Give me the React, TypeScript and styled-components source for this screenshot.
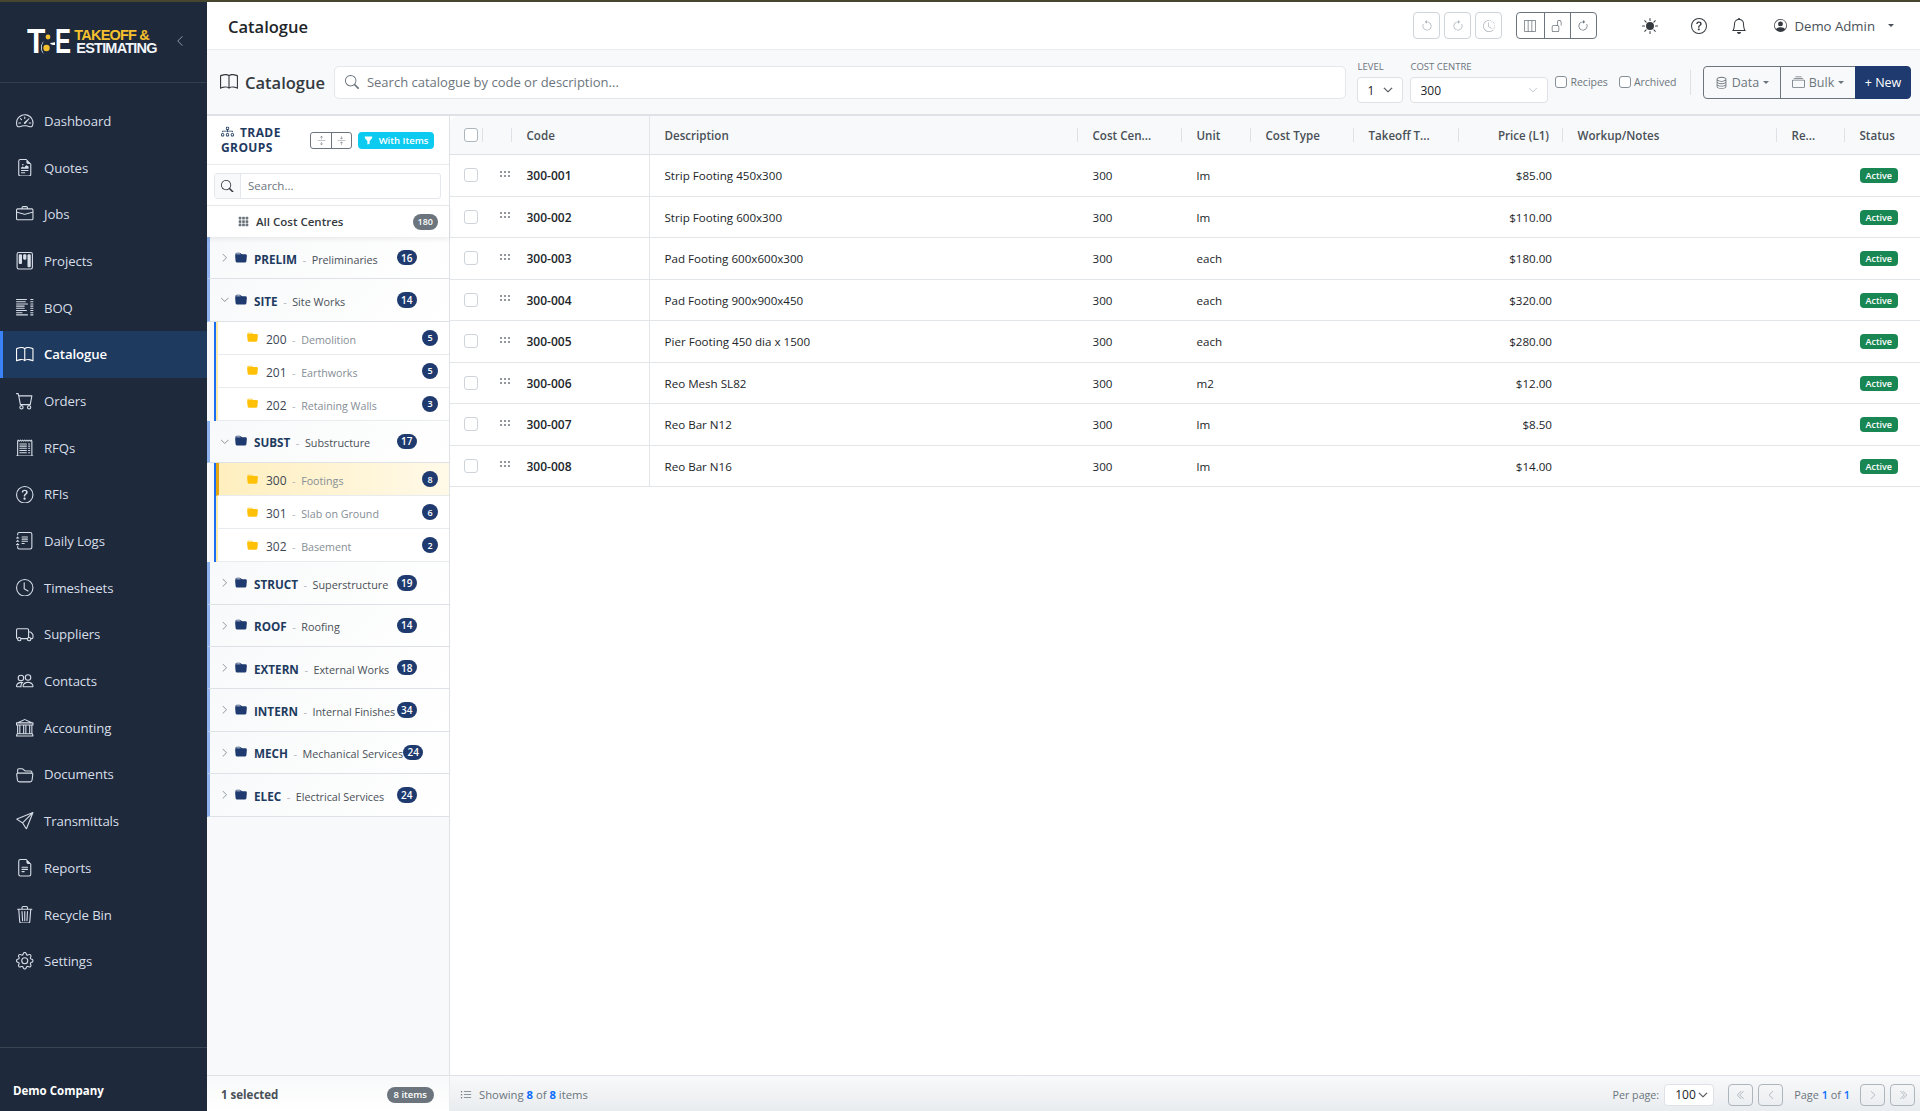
import React from "react";
import styled, { createGlobalStyle } from "styled-components";
import {
  BsArrowClockwise,
  BsArrowCounterclockwise,
  BsArrowsCollapse,
  BsArrowsExpand,
  BsBank,
  BsBell,
  BsBook,
  BsBriefcase,
  BsCart,
  BsChevronDoubleLeft,
  BsChevronDoubleRight,
  BsChevronDown,
  BsChevronLeft,
  BsChevronRight,
  BsClock,
  BsClockHistory,
  BsCollection,
  BsDatabase,
  BsDiagram3,
  BsFileEarmarkRichtext,
  BsFileEarmarkText,
  BsFolder2Open,
  BsFolderFill,
  BsFunnelFill,
  BsGear,
  BsGrid3X3GapFill,
  BsJournalText,
  BsKanban,
  BsLayoutThreeColumns,
  BsListColumns,
  BsListUl,
  BsPeople,
  BsPersonCircle,
  BsQuestionCircle,
  BsReceiptCutoff,
  BsSearch,
  BsSend,
  BsSpeedometer2,
  BsSunFill,
  BsTrash3,
  BsTruck,
  BsUnlock,
} from "react-icons/bs";

const FONT = `"Open Sans", "Noto Sans", "Liberation Sans", sans-serif`;
const NAVY = "#1e3a6e";

const GlobalStyle = createGlobalStyle`
  html, body, #root {
    margin: 0;
    height: 100%;
  }
  body {
    font-family: ${FONT};
    font-stretch: 88%;
    background: #fff;
    overflow: hidden;
  }
  * {
    box-sizing: border-box;
  }
`;

const Page = styled.div`
  height: 1111px;
  display: flex;
  flex-direction: column;
`;

const TopStrip = styled.div`
  height: 2px;
  background: #47472f;
  flex-shrink: 0;
`;

const Shell = styled.div`
  flex: 1;
  display: flex;
  min-height: 0;
`;

/* sidebar */
const Sidebar = styled.aside`
  width: 207px;
  flex-shrink: 0;
  background: #1e293b;
  display: flex;
  flex-direction: column;
`;

const LogoBar = styled.div`
  height: 81px;
  padding: 27px 21px 0 27px;
  display: flex;
  align-items: flex-start;
  justify-content: space-between;
  border-bottom: 1px solid rgba(255, 255, 255, 0.1);
`;

const Logo = styled.div`
  display: flex;
  align-items: center;
  height: 26px;
  font-family: "Liberation Sans", sans-serif;
  font-stretch: normal;
`;

const LogoLetter = styled.span<{ $squeeze: number }>`
  display: inline-block;
  color: #fff;
  font-size: 30px;
  font-weight: 700;
  line-height: 26px;
  transform: scale(${(p) => p.$squeeze}, 1.15);
  transform-origin: left center;
`;

const LogoT = styled(LogoLetter)`
  margin-right: -4px;
`;

const LogoE = styled(LogoLetter)`
  margin-right: -1px;
`;

const LogoSwirl = styled.svg`
  width: 14px;
  height: 26px;
  flex-shrink: 0;
`;

const LogoWords = styled.div`
  display: flex;
  flex-direction: column;
  font-size: 14.5px;
  font-weight: 700;
  line-height: 13px;
  letter-spacing: -0.8px;
`;

const LogoTop = styled.span`
  color: #f5c02e;
`;

const LogoBottom = styled.span`
  color: #f1f5f9;
  margin-left: 2px;
`;

const CollapseBtn = styled.span`
  color: #8d97a8;
  font-size: 12px;
  margin-top: 6px;
  display: flex;
`;

const Nav = styled.nav`
  padding-top: 14.5px;
  flex: 1;
`;

const NavItem = styled.div<{ $active?: boolean }>`
  height: 46.7px;
  display: flex;
  align-items: center;
  gap: 10.5px;
  padding-left: ${(p) => (p.$active ? "13px" : "16px")};
  font-size: 13.2px;
  letter-spacing: -0.1px;
  font-weight: ${(p) => (p.$active ? 600 : 400)};
  color: ${(p) => (p.$active ? "#fff" : "#d7dee8")};
  background: ${(p) => (p.$active ? "#1e3a5f" : "transparent")};
  border-left: ${(p) => (p.$active ? "3px solid #3b82f6" : "none")};

  svg {
    font-size: 17.5px;
    flex-shrink: 0;
  }
`;

const SideFoot = styled.div`
  height: 64px;
  padding: 0 13px 13px;
  display: flex;
  align-items: flex-end;
  border-top: 1px solid rgba(255, 255, 255, 0.12);
  color: #fff;
  font-size: 11.5px;
  font-weight: 700;
`;

/* main column */
const Main = styled.main`
  flex: 1;
  min-width: 0;
  display: flex;
  flex-direction: column;
`;

const Header = styled.header`
  height: 48px;
  flex-shrink: 0;
  display: flex;
  align-items: center;
  padding: 0 26px 0 21px;
  border-bottom: 1px solid #e9ecef;
`;

const PageTitle = styled.h1`
  margin: 0;
  padding-top: 1px;
  font-size: 16.5px;
  font-weight: 600;
  color: #212529;
  flex: 1;
`;

const IconBtnRow = styled.div`
  display: flex;
  gap: 3.5px;
  margin-right: 14px;
`;

const GhostBtn = styled.span`
  width: 27.5px;
  height: 27px;
  display: flex;
  align-items: center;
  justify-content: center;
  border: 1px solid #ced4da;
  border-radius: 4px;
  color: #adb5bd;
  font-size: 12px;
`;

const BtnGroup = styled.div`
  display: flex;
  height: 27px;
  border: 1px solid #6c757d;
  border-radius: 4px;
  margin-right: 45.5px;
`;

const GroupBtn = styled.span`
  width: 26.2px;
  display: flex;
  align-items: center;
  justify-content: center;
  color: #6c757d;
  font-size: 12px;

  & + & {
    border-left: 1px solid #6c757d;
  }
`;

const HeadIcon = styled.span<{ $gap: number }>`
  display: flex;
  font-size: 16px;
  color: #343a40;
  margin-right: ${(p) => p.$gap}px;
`;

const UserMenu = styled.div`
  display: flex;
  align-items: center;
  gap: 7px;
  font-size: 13.2px;
  color: #495057;

  svg {
    font-size: 13px;
    color: #343a40;
  }
`;

const Caret = styled.span`
  display: inline-block;
  width: 0;
  height: 0;
  border-left: 3.6px solid transparent;
  border-right: 3.6px solid transparent;
  border-top: 3.6px solid currentColor;
`;

const UserCaret = styled(Caret)`
  margin-left: 6px;
  color: #495057;
`;

const Toolbar = styled.div`
  height: 66px;
  flex-shrink: 0;
  display: flex;
  align-items: center;
  padding: 0 9px 0 13px;
  background: #f8f9fa;
  border-bottom: 2px solid #dee2e6;
`;

const ToolTitle = styled.div`
  display: flex;
  align-items: center;
  gap: 7px;
  font-size: 16.5px;
  font-weight: 600;
  color: #343a40;
  margin-right: 9px;

  svg {
    font-size: 18px;
  }
`;

const SearchBox = styled.div`
  flex: 1;
  height: 33px;
  display: flex;
  align-items: center;
  gap: 8px;
  padding: 0 10px;
  background: #fff;
  border: 1px solid #e4e7eb;
  border-radius: 5px;
  color: #6c757d;
  font-size: 13px;
  margin-right: 11px;

  svg {
    font-size: 14px;
  }
`;

const Field = styled.div`
  display: flex;
  flex-direction: column;
  gap: 4px;
  margin-right: 7px;
`;

const FieldLabel = styled.label`
  font-size: 9.5px;
  line-height: 12px;
  color: #6c757d;
`;

const FakeSelect = styled.div<{ $w: number; $pale?: boolean }>`
  width: ${(p) => p.$w}px;
  height: 26px;
  display: flex;
  align-items: center;
  justify-content: space-between;
  padding: 0 9px 0 9px;
  background: #fff;
  border: 1px solid #dee2e6;
  border-radius: 4px;
  font-size: 12px;
  color: #212529;

  svg {
    font-size: 10px;
    color: ${(p) => (p.$pale ? "#adb5bd" : "#343a40")};
    stroke-width: ${(p) => (p.$pale ? 0 : 0.8)};
  }
`;

const Check = styled.input.attrs({ type: "checkbox" })<{ $strong?: boolean }>`
  appearance: none;
  margin: 0;
  flex-shrink: 0;
  width: 14px;
  height: 14px;
  background: #fff;
  border: 1px solid ${(p) => (p.$strong ? "#adb5bd" : "#ced4da")};
  border-radius: 3px;
`;

const CheckLabel = styled.label`
  display: flex;
  align-items: center;
  gap: 3px;
  font-size: 10.5px;
  color: #6c757d;
  margin-right: 11px;
  margin-top: -1px;

  input {
    width: 12px;
    height: 12px;
    border-color: #868e96;
  }

  &:last-of-type {
    margin-right: 13.5px;
  }
`;

const ToolDivider = styled.span`
  width: 1px;
  height: 25px;
  background: #dee2e6;
  margin-right: 12px;
`;

const ActionGroup = styled.div`
  display: flex;
  height: 33px;
`;

const ActionBtn = styled.span<{ $w: number; $primary?: boolean }>`
  width: ${(p) => p.$w}px;
  display: flex;
  align-items: center;
  justify-content: center;
  gap: 4px;
  font-size: 12.5px;
  font-weight: ${(p) => (p.$primary ? 500 : 400)};
  color: ${(p) => (p.$primary ? "#fff" : "#6c757d")};
  background: ${(p) => (p.$primary ? NAVY : "transparent")};
  border: 1px solid ${(p) => (p.$primary ? NAVY : "#6c757d")};
  margin-left: -1px;

  &:first-child {
    margin-left: 0;
    border-radius: 4px 0 0 4px;
  }
  &:last-child {
    border-radius: 0 4px 4px 0;
  }
  svg {
    font-size: 13px;
  }
`;

const Body = styled.div`
  flex: 1;
  min-height: 0;
  display: flex;
`;

/* trade groups */
const TradePanel = styled.section`
  width: 243px;
  flex-shrink: 0;
  display: flex;
  flex-direction: column;
  background: #f8f9fa;
  border-right: 1px solid #dee2e6;
`;

const TradeHead = styled.div`
  height: 49px;
  display: flex;
  align-items: center;
  padding: 0 14px 0 14px;
  background: #fff;
  border-bottom: 1px solid #e9ecef;
`;

const TradeTitle = styled.div`
  width: 89px;
  font-size: 12px;
  line-height: 14.5px;
  font-weight: 700;
  letter-spacing: 0.4px;
  color: #1e3a5f;

  svg {
    font-size: 13px;
    margin-right: 6px;
    vertical-align: -1px;
  }
`;

const MiniGroup = styled.div`
  display: flex;
  height: 17px;
  border: 1px solid #6c757d;
  border-radius: 3px;
  margin-right: 6px;
`;

const MiniBtn = styled.span`
  width: 20px;
  display: flex;
  align-items: center;
  justify-content: center;
  color: #868e96;
  font-size: 9px;

  & + & {
    border-left: 1px solid #6c757d;
  }
`;

const FilterPill = styled.span`
  width: 76px;
  height: 17px;
  display: flex;
  align-items: center;
  justify-content: center;
  gap: 6px;
  border-radius: 4px;
  background: #0dcaf0;
  color: #fff;
  font-size: 9.5px;
  font-weight: 600;

  svg {
    font-size: 9px;
  }
`;

const TradeSearchRow = styled.div`
  height: 41px;
  padding: 8px 8px 6px 7px;
  background: #fff;
  border-bottom: 1px solid #e9ecef;
`;

const TradeSearch = styled.div`
  height: 26px;
  display: flex;
  border: 1px solid #e4e7eb;
  border-radius: 3px;
  font-size: 11.5px;
  color: #6c757d;
`;

const SearchAddon = styled.span`
  width: 26px;
  display: flex;
  align-items: center;
  justify-content: center;
  background: #f8f9fa;
  border-right: 1px solid #e4e7eb;
  color: #343a40;
  font-size: 12.5px;
`;

const SearchPlaceholder = styled.span`
  padding-left: 7px;
  line-height: 24px;
`;

const AllRow = styled.div`
  height: 31px;
  display: flex;
  align-items: center;
  gap: 7px;
  padding: 0 11px 0 31px;
  background: #fff;
  box-shadow: 0 2px 5px rgba(0, 0, 0, 0.08);
  font-size: 11.5px;
  font-weight: 600;
  color: #343a40;
  position: relative;

  svg {
    font-size: 11px;
    color: #6c757d;
  }
`;

const AllLabel = styled.span`
  flex: 1;
`;

const GrayBadge = styled.span`
  min-width: 24px;
  height: 16px;
  padding: 0 5px;
  display: flex;
  align-items: center;
  justify-content: center;
  border-radius: 8px;
  background: #6c757d;
  color: #fff;
  font-size: 9px;
  font-weight: 600;
`;

const GroupRow = styled.div`
  height: 42.4px;
  display: flex;
  align-items: center;
  padding: 0 32px 0 10px;
  background: linear-gradient(135deg, #f8f9fa, #fff);
  border-left: 3px solid #8fb3ee;
  border-bottom: 1px solid #dee2e6;
`;

const Chevron = styled.span`
  width: 15px;
  flex-shrink: 0;
  display: flex;
  color: #868e96;
  font-size: 9.5px;
`;

const GroupFolder = styled.span`
  display: flex;
  flex-shrink: 0;
  width: 19px;
  color: ${NAVY};
  font-size: 12px;
`;

const RowText = styled.span`
  flex: 1;
  white-space: nowrap;
`;

const GroupCode = styled.span`
  font-size: 11.7px;
  font-weight: 700;
  color: #1e3a5f;
`;

const Dash = styled.span`
  color: #adb5bd;
  font-size: 11px;
  margin: 0 5.5px;
`;

const GroupName = styled.span`
  font-size: 10.8px;
  color: #495057;
`;

const CountBadge = styled.span`
  flex-shrink: 0;
  min-width: 20px;
  height: 15.5px;
  padding: 0 4.5px;
  display: flex;
  align-items: center;
  justify-content: center;
  border-radius: 8px;
  background: ${NAVY};
  color: #fff;
  font-size: 10px;
  font-weight: 600;
`;

const ChildList = styled.div`
  margin-left: 7px;
  border-left: 2px solid #1a6ff0;
`;

const ChildRow = styled.div<{ $selected?: boolean }>`
  height: 33px;
  display: flex;
  align-items: center;
  padding: 0 11px 0 ${(p) => (p.$selected ? "28px" : "29px")};
  background: ${(p) => (p.$selected ? "linear-gradient(90deg, #ffefbf, #fff9e8)" : "#fff")};
  border-left: ${(p) => (p.$selected ? "3px solid #e3a612" : "2px solid #ffe9a8")};
  border-bottom: 1px solid #e9ecef;
`;

const ChildFolder = styled.span`
  display: flex;
  flex-shrink: 0;
  width: 19px;
  color: #ffc107;
  font-size: 11px;
`;

const ChildCode = styled.span`
  font-size: 12px;
  font-weight: 500;
  color: #3d4654;
`;

const ChildName = styled.span`
  font-size: 10.7px;
  color: #868e96;
`;

const ChildBadge = styled(CountBadge)`
  min-width: 16px;
  width: 16px;
  height: 16px;
  padding: 0;
  font-size: 9px;
`;

/* table */
const COLUMNS = "33px 28px 139px 428px 104px 69px 103px 105px 104px 214px 68px 1fr";

const TablePanel = styled.section`
  flex: 1;
  min-width: 0;
  background: #fff;
  border-radius: 8px 0 0 8px;
`;

const GridRow = styled.div`
  display: grid;
  grid-template-columns: ${COLUMNS};
  height: 41.5px;
  border-bottom: 1px solid #e3e6e9;
  align-items: stretch;
`;

const HeadRow = styled(GridRow)`
  height: 39px;
  background: #f8f9fa;
  border-bottom: 1px solid #dee2e6;
  border-radius: 8px 0 0 0;
`;

const HeadCell = styled.div<{ $right?: boolean; $rule?: boolean; $noLine?: boolean }>`
  display: flex;
  align-items: center;
  justify-content: ${(p) => (p.$right ? "flex-end" : "flex-start")};
  padding: ${(p) => (p.$right ? "0 14px 0 0" : `0 14px 0 ${p.$rule ? 15.5 : 14.5}px`)};
  font-size: 11.6px;
  font-weight: 600;
  color: #495057;
  white-space: nowrap;
  background: ${(p) =>
    p.$noLine ? "none" : "linear-gradient(#dee2e6, #dee2e6) right center / 1px 14px no-repeat"};
  border-right: ${(p) => (p.$rule ? "1px solid #e3e6e9" : "none")};
`;

const Cell = styled.div<{ $right?: boolean; $bold?: boolean; $rule?: boolean }>`
  display: flex;
  align-items: center;
  justify-content: ${(p) => (p.$right ? "flex-end" : "flex-start")};
  padding: ${(p) => (p.$right ? "1px 11px 0 0" : `1px 14px 0 ${p.$rule ? 15.5 : 14.5}px`)};
  font-size: ${(p) => (p.$bold ? "12px" : "11.6px")};
  font-weight: ${(p) => (p.$bold ? 600 : 400)};
  color: #212529;
  border-right: ${(p) => (p.$rule ? "1px solid #e3e6e9" : "none")};
`;

const CheckCell = styled.div`
  display: flex;
  align-items: center;
  padding-left: 14px;
`;

const HeadCheckCell = styled(CheckCell)`
  background: linear-gradient(#dee2e6, #dee2e6) right center / 1px 14px no-repeat;
`;

const GripCell = styled.div`
  display: flex;
  align-items: center;
  padding: 0 0 3px 17px;
  color: #6c757d;
`;

const GripDots = styled.svg`
  width: 10px;
  height: 6px;
  fill: currentColor;
`;

const ActiveBadge = styled.span`
  height: 15px;
  padding: 0 6px;
  display: flex;
  align-items: center;
  border-radius: 4px;
  background: #198754;
  color: #fff;
  font-size: 9px;
  font-weight: 600;
`;

/* status bar */
const StatusBar = styled.footer`
  height: 36px;
  flex-shrink: 0;
  display: flex;
  border-top: 1px solid #dee2e6;
`;

const StatusLeft = styled.div`
  width: 243px;
  display: flex;
  align-items: center;
  justify-content: space-between;
  padding: 2px 15px 0 14px;
  background: linear-gradient(#f8f9fa, #fff);
  border-right: 1px solid #e9ecef;
  font-size: 11.5px;
  font-weight: 700;
  color: #495057;
`;

const StatusRight = styled.div`
  flex: 1;
  display: flex;
  align-items: center;
  padding: 2px 5px 0 10px;
  background: linear-gradient(#f8f9fa, #e9ecef);
  font-size: 11.3px;
  color: #6c757d;
`;

const ItemsPill = styled.span`
  height: 16px;
  padding: 0 7px;
  display: flex;
  align-items: center;
  border-radius: 8px;
  background: #6c757d;
  color: #fff;
  font-size: 9.5px;
  font-weight: 600;
`;

const ShowingText = styled.span`
  flex: 1;
  display: flex;
  align-items: center;
  gap: 7px;

  svg {
    font-size: 12px;
  }

  b {
    color: #0d6efd;
    font-weight: 700;
  }
`;

const PerPage = styled.span`
  font-size: 10.7px;
  margin-right: 5px;
`;

const PagerSelect = styled(FakeSelect)`
  height: 22px;
  margin-right: 14px;
  padding: 0 5px 0 10px;
`;

const PagerBtn = styled.span`
  width: 25px;
  height: 22px;
  display: flex;
  align-items: center;
  justify-content: center;
  border: 1px solid #adb5bd;
  border-radius: 4px;
  color: #adb5bd;
  font-size: 10px;
  margin-right: 5px;

  &:last-child {
    margin-right: 0;
  }
`;

const PageInfo = styled.span`
  font-size: 10.9px;
  margin: 0 10px 0 6px;

  b {
    color: #0d6efd;
    font-weight: 600;
  }
`;

type NavEntry = { label: string; icon: React.ReactNode; active?: boolean };

const NAV_ITEMS: NavEntry[] = [
  { label: "Dashboard", icon: <BsSpeedometer2 /> },
  { label: "Quotes", icon: <BsFileEarmarkRichtext /> },
  { label: "Jobs", icon: <BsBriefcase /> },
  { label: "Projects", icon: <BsKanban /> },
  { label: "BOQ", icon: <BsListColumns /> },
  { label: "Catalogue", icon: <BsBook />, active: true },
  { label: "Orders", icon: <BsCart /> },
  { label: "RFQs", icon: <BsReceiptCutoff /> },
  { label: "RFIs", icon: <BsQuestionCircle /> },
  { label: "Daily Logs", icon: <BsJournalText /> },
  { label: "Timesheets", icon: <BsClock /> },
  { label: "Suppliers", icon: <BsTruck /> },
  { label: "Contacts", icon: <BsPeople /> },
  { label: "Accounting", icon: <BsBank /> },
  { label: "Documents", icon: <BsFolder2Open /> },
  { label: "Transmittals", icon: <BsSend /> },
  { label: "Reports", icon: <BsFileEarmarkText /> },
  { label: "Recycle Bin", icon: <BsTrash3 /> },
  { label: "Settings", icon: <BsGear /> },
];

type Child = { code: string; name: string; count: number; selected?: boolean };
type Group = { code: string; name: string; count: number; children?: Child[] };

const GROUPS: Group[] = [
  { code: "PRELIM", name: "Preliminaries", count: 16 },
  {
    code: "SITE",
    name: "Site Works",
    count: 14,
    children: [
      { code: "200", name: "Demolition", count: 5 },
      { code: "201", name: "Earthworks", count: 5 },
      { code: "202", name: "Retaining Walls", count: 3 },
    ],
  },
  {
    code: "SUBST",
    name: "Substructure",
    count: 17,
    children: [
      { code: "300", name: "Footings", count: 8, selected: true },
      { code: "301", name: "Slab on Ground", count: 6 },
      { code: "302", name: "Basement", count: 2 },
    ],
  },
  { code: "STRUCT", name: "Superstructure", count: 19 },
  { code: "ROOF", name: "Roofing", count: 14 },
  { code: "EXTERN", name: "External Works", count: 18 },
  { code: "INTERN", name: "Internal Finishes", count: 34 },
  { code: "MECH", name: "Mechanical Services", count: 24 },
  { code: "ELEC", name: "Electrical Services", count: 24 },
];

const ITEMS = [
  { code: "300-001", desc: "Strip Footing 450x300", unit: "lm", price: "$85.00" },
  { code: "300-002", desc: "Strip Footing 600x300", unit: "lm", price: "$110.00" },
  { code: "300-003", desc: "Pad Footing 600x600x300", unit: "each", price: "$180.00" },
  { code: "300-004", desc: "Pad Footing 900x900x450", unit: "each", price: "$320.00" },
  { code: "300-005", desc: "Pier Footing 450 dia x 1500", unit: "each", price: "$280.00" },
  { code: "300-006", desc: "Reo Mesh SL82", unit: "m2", price: "$12.00" },
  { code: "300-007", desc: "Reo Bar N12", unit: "lm", price: "$8.50" },
  { code: "300-008", desc: "Reo Bar N16", unit: "lm", price: "$14.00" },
];

const App: React.FC = () => {
  return (
    <Page>
      <GlobalStyle />
      <TopStrip />
      <Shell>
        <Sidebar>
          <LogoBar>
            <Logo>
              <LogoT $squeeze={1}>T</LogoT>
              <LogoSwirl viewBox="0 0 14 26">
                <circle cx="7" cy="8" r="2.4" fill="#f5c02e" />
                <circle cx="5.5" cy="19" r="3.2" fill="#f5c02e" />
                <path d="M3 12 C-1 15 -1 22 3 25 C0 21 0 16 3 12 Z" fill="#fff" />
                <path d="M9 14 C12 14 14 13 14 13 L14 16 C12 16 10 16 9 14 Z" fill="#fff" />
              </LogoSwirl>
              <LogoE $squeeze={0.8}>E</LogoE>
              <LogoWords>
                <LogoTop>TAKEOFF &amp;</LogoTop>
                <LogoBottom>ESTIMATING</LogoBottom>
              </LogoWords>
            </Logo>
            <CollapseBtn>
              <BsChevronLeft />
            </CollapseBtn>
          </LogoBar>
          <Nav>
            {NAV_ITEMS.map((item) => (
              <NavItem key={item.label} $active={item.active}>
                {item.icon}
                {item.label}
              </NavItem>
            ))}
          </Nav>
          <SideFoot>Demo Company</SideFoot>
        </Sidebar>

        <Main>
          <Header>
            <PageTitle>Catalogue</PageTitle>
            <IconBtnRow>
              <GhostBtn>
                <BsArrowCounterclockwise />
              </GhostBtn>
              <GhostBtn>
                <BsArrowClockwise />
              </GhostBtn>
              <GhostBtn>
                <BsClockHistory />
              </GhostBtn>
            </IconBtnRow>
            <BtnGroup>
              <GroupBtn>
                <BsLayoutThreeColumns />
              </GroupBtn>
              <GroupBtn>
                <BsUnlock />
              </GroupBtn>
              <GroupBtn>
                <BsArrowClockwise />
              </GroupBtn>
            </BtnGroup>
            <HeadIcon $gap={32.5}>
              <BsSunFill />
            </HeadIcon>
            <HeadIcon $gap={24}>
              <BsQuestionCircle />
            </HeadIcon>
            <HeadIcon $gap={27.5}>
              <BsBell />
            </HeadIcon>
            <UserMenu>
              <BsPersonCircle />
              Demo Admin
              <UserCaret />
            </UserMenu>
          </Header>

          <Toolbar>
            <ToolTitle>
              <BsBook />
              Catalogue
            </ToolTitle>
            <SearchBox>
              <BsSearch />
              Search catalogue by code or description...
            </SearchBox>
            <Field>
              <FieldLabel>LEVEL</FieldLabel>
              <FakeSelect $w={46}>
                1
                <BsChevronDown />
              </FakeSelect>
            </Field>
            <Field>
              <FieldLabel>COST CENTRE</FieldLabel>
              <FakeSelect $w={138} $pale>
                300
                <BsChevronDown />
              </FakeSelect>
            </Field>
            <CheckLabel>
              <Check />
              Recipes
            </CheckLabel>
            <CheckLabel>
              <Check />
              Archived
            </CheckLabel>
            <ToolDivider />
            <ActionGroup>
              <ActionBtn $w={78}>
                <BsDatabase />
                Data
                <Caret />
              </ActionBtn>
              <ActionBtn $w={76}>
                <BsCollection />
                Bulk
                <Caret />
              </ActionBtn>
              <ActionBtn $w={56} $primary>
                + New
              </ActionBtn>
            </ActionGroup>
          </Toolbar>

          <Body>
            <TradePanel>
              <TradeHead>
                <TradeTitle>
                  <BsDiagram3 />
                  TRADE GROUPS
                </TradeTitle>
                <MiniGroup>
                  <MiniBtn>
                    <BsArrowsExpand />
                  </MiniBtn>
                  <MiniBtn>
                    <BsArrowsCollapse />
                  </MiniBtn>
                </MiniGroup>
                <FilterPill>
                  <BsFunnelFill />
                  With Items
                </FilterPill>
              </TradeHead>
              <TradeSearchRow>
                <TradeSearch>
                  <SearchAddon>
                    <BsSearch />
                  </SearchAddon>
                  <SearchPlaceholder>Search...</SearchPlaceholder>
                </TradeSearch>
              </TradeSearchRow>
              <AllRow>
                <BsGrid3X3GapFill />
                <AllLabel>All Cost Centres</AllLabel>
                <GrayBadge>180</GrayBadge>
              </AllRow>
              {GROUPS.map((group) => (
                <React.Fragment key={group.code}>
                  <GroupRow>
                    <Chevron>{group.children ? <BsChevronDown /> : <BsChevronRight />}</Chevron>
                    <GroupFolder>
                      <BsFolderFill />
                    </GroupFolder>
                    <RowText>
                      <GroupCode>{group.code}</GroupCode>
                      <Dash>-</Dash>
                      <GroupName>{group.name}</GroupName>
                    </RowText>
                    <CountBadge>{group.count}</CountBadge>
                  </GroupRow>
                  {group.children && (
                    <ChildList>
                      {group.children.map((child) => (
                        <ChildRow key={child.code} $selected={child.selected}>
                          <ChildFolder>
                            <BsFolderFill />
                          </ChildFolder>
                          <RowText>
                            <ChildCode>{child.code}</ChildCode>
                            <Dash>-</Dash>
                            <ChildName>{child.name}</ChildName>
                          </RowText>
                          <ChildBadge>{child.count}</ChildBadge>
                        </ChildRow>
                      ))}
                    </ChildList>
                  )}
                </React.Fragment>
              ))}
            </TradePanel>

            <TablePanel>
              <HeadRow>
                <HeadCheckCell>
                  <Check $strong />
                </HeadCheckCell>
                <HeadCell />
                <HeadCell $rule $noLine>
                  Code
                </HeadCell>
                <HeadCell>Description</HeadCell>
                <HeadCell>Cost Cen...</HeadCell>
                <HeadCell>Unit</HeadCell>
                <HeadCell>Cost Type</HeadCell>
                <HeadCell>Takeoff T...</HeadCell>
                <HeadCell $right>Price (L1)</HeadCell>
                <HeadCell>Workup/Notes</HeadCell>
                <HeadCell>Re...</HeadCell>
                <HeadCell $noLine>Status</HeadCell>
              </HeadRow>
              {ITEMS.map((item) => (
                <GridRow key={item.code}>
                  <CheckCell>
                    <Check />
                  </CheckCell>
                  <GripCell>
                    <GripDots viewBox="0 0 10 6">
                      {[1, 5, 9].flatMap((x) =>
                        [1, 5].map((y) => <circle key={`${x}-${y}`} cx={x} cy={y} r="1" />)
                      )}
                    </GripDots>
                  </GripCell>
                  <Cell $bold $rule>
                    {item.code}
                  </Cell>
                  <Cell>{item.desc}</Cell>
                  <Cell>300</Cell>
                  <Cell>{item.unit}</Cell>
                  <Cell />
                  <Cell />
                  <Cell $right>{item.price}</Cell>
                  <Cell />
                  <Cell />
                  <Cell>
                    <ActiveBadge>Active</ActiveBadge>
                  </Cell>
                </GridRow>
              ))}
            </TablePanel>
          </Body>

          <StatusBar>
            <StatusLeft>
              1 selected
              <ItemsPill>8 items</ItemsPill>
            </StatusLeft>
            <StatusRight>
              <ShowingText>
                <BsListUl />
                <span>
                  Showing <b>8</b> of <b>8</b> items
                </span>
              </ShowingText>
              <PerPage>Per page:</PerPage>
              <PagerSelect $w={50}>
                100
                <BsChevronDown />
              </PagerSelect>
              <PagerBtn>
                <BsChevronDoubleLeft />
              </PagerBtn>
              <PagerBtn>
                <BsChevronLeft />
              </PagerBtn>
              <PageInfo>
                Page <b>1</b> of <b>1</b>
              </PageInfo>
              <PagerBtn>
                <BsChevronRight />
              </PagerBtn>
              <PagerBtn>
                <BsChevronDoubleRight />
              </PagerBtn>
            </StatusRight>
          </StatusBar>
        </Main>
      </Shell>
    </Page>
  );
};

export default App;
